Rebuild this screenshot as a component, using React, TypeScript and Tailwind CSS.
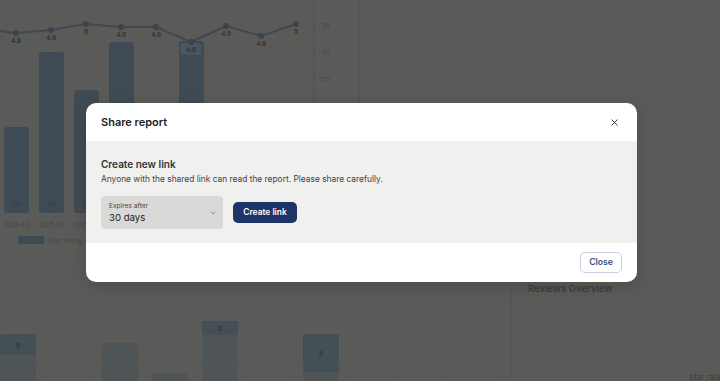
import { X, ChevronDown } from 'lucide-react';

const points = [
  { x: 16, y: 33, v: '4.8' },
  { x: 51, y: 30, v: '4.9' },
  { x: 86, y: 24, v: '5' },
  { x: 121, y: 27, v: '4.9' },
  { x: 156, y: 27, v: '4.9' },
  { x: 191, y: 42, v: '4.6' },
  { x: 226, y: 26, v: '4.9' },
  { x: 261, y: 36, v: '4.8' },
  { x: 296, y: 24, v: '5' },
];

// only the first three columns show their labels, the rest sit under the dialog
const bars = [
  { top: 127, v: '16', label: '2024-12' },
  { top: 52, v: '30', label: '2025-01' },
  { top: 90, v: '23', label: '2025-02' },
  { top: 42, v: '', label: '' },
  { top: 120, v: '', label: '' },
  { top: 41, v: '', label: '' },
  { top: 140, v: '', label: '' },
  { top: 150, v: '', label: '' },
  { top: 130, v: '', label: '' },
];

const chartFont = { fontFamily: '"Liberation Sans", Arial, sans-serif' };

function RatingChart() {
  const line = points.map((p) => `${p.x},${p.y}`).join(' ');
  return (
    <svg width="360" height="280" className="shrink-0" style={chartFont}>
      {[33, 68, 103, 138, 173, 208, 243, 278].map((x) => (
        <line key={x} x1={x} y1={0} x2={x} y2={215} stroke="#565654" strokeDasharray="1 2" />
      ))}
      {bars.map((b, i) => (
        <g key={i}>
          <rect x={4 + i * 35} y={b.top} width={25} height={213 - b.top} rx={3} fill="#3f4b54" />
          {b.v && (
            <text x={16.5 + i * 35} y={206} textAnchor="middle" fontSize="7.5" fontWeight="700" fill="#3a4146">
              {b.v}
            </text>
          )}
          {b.label && (
            <text x={16.5 + i * 35} y={227} textAnchor="middle" fontSize="7" fill="#484847">
              {b.label}
            </text>
          )}
        </g>
      ))}
      <rect x={181} y={43} width={20} height={12} rx={2} fill="#4a5660" />
      <polyline points={`0,31 ${line}`} fill="none" stroke="#3e4850" strokeWidth="2" />
      {points.map((p, i) => (
        <g key={i}>
          <circle cx={p.x} cy={p.y} r={3} fill="#3b444b" />
          <text x={p.x} y={p.y + 10} textAnchor="middle" fontSize="7" fontWeight="700" fill="#343535">
            {p.v}
          </text>
        </g>
      ))}
      <line x1={314} y1={0} x2={314} y2={215} stroke="#50504e" />
      {[
        { y: 25, v: '35' },
        { y: 52, v: '30' },
        { y: 79, v: '25' },
      ].map((t) => (
        <g key={t.v}>
          <line x1={314} y1={t.y} x2={317} y2={t.y} stroke="#50504e" />
          <text x={321} y={t.y + 3} fontSize="8" fill="#4b4b49">
            {t.v}
          </text>
        </g>
      ))}
      <line x1={359.5} y1={0} x2={359.5} y2={272} stroke="#545452" />
      <rect x={18} y={236} width={26} height={8} fill="#3f4b54" />
      <text x={48} y={243} fontSize="7.5" fill="#484847">
        Star rating
      </text>
    </svg>
  );
}

const stacks = [
  { x: 0, top: 334, seg: 355, v: '5' },
  { x: 102, top: 343, seg: 0, v: '' },
  { x: 152, top: 373, seg: 0, v: '' },
  { x: 202, top: 321, seg: 335, v: '3' },
  { x: 303, top: 334, seg: 372, v: '9' },
];

function CountChart() {
  return (
    <svg width="512" height="101" viewBox="0 280 512 101" className="shrink-0" style={chartFont}>
      <line x1={0} y1={322} x2={497} y2={322} stroke="#565654" />
      <line x1={0} y1={363} x2={497} y2={363} stroke="#565654" />
      {[43, 95, 145, 195, 245, 295, 345, 397, 447, 497].map((x) => (
        <line key={x} x1={x} y1={296} x2={x} y2={381} stroke="#565654" />
      ))}
      {stacks.map((s, i) => (
        <g key={i}>
          <rect x={s.x} y={s.top} width={36} height={381 - s.top} rx={3} fill="#4f5457" />
          {s.seg > 0 && (
            <>
              <rect x={s.x} y={s.top} width={36} height={s.seg - s.top} rx={3} fill="#444f56" />
              <text x={s.x + 18} y={(s.top + s.seg) / 2 + 3} textAnchor="middle" fontSize="7.5" fontWeight="700" fill="#35383a">
                {s.v}
              </text>
            </>
          )}
        </g>
      ))}
      <line x1={511.5} y1={280} x2={511.5} y2={381} stroke="#545452" />
    </svg>
  );
}

export default function App() {
  return (
    <div className="relative w-[720px] h-[381px] overflow-hidden bg-[#5a5a58] font-['Inter',sans-serif]">
      <div className="flex flex-col">
        <div className="flex h-[280px]">
          <RatingChart />
          <div className="flex-1" />
        </div>
        <div className="flex h-[101px]">
          <CountChart />
          <div className="flex-1 relative pl-[16px] overflow-hidden">
            <div className="mt-[2px] text-[9.5px] font-semibold text-[#3d3d3c]">Reviews Overview</div>
            <div className="absolute left-[177px] top-[92px] text-[8px] leading-[10px] text-[#3d3d3c] whitespace-nowrap">Star rating</div>
          </div>
        </div>
      </div>

      <div className="absolute left-[86px] top-[103px] w-[551px] rounded-[10px] bg-white overflow-hidden shadow-[0_4px_16px_rgba(0,0,0,0.15)]">
        <div className="flex items-center justify-between h-[38px] px-[15px]">
          <span className="text-[11px] font-semibold text-[#222]">Share report</span>
          <X className="w-[11px] h-[11px] text-[#333] mr-[2px]" strokeWidth={2} />
        </div>
        <div className="bg-[#f0f0ef] px-[15px] pt-[16px] h-[102px]">
          <div className="text-[10px] leading-[14px] font-semibold text-[#333]">Create new link</div>
          <div className="text-[8.4px] leading-[12px] text-[#444] mt-[2px]">
            Anyone with the shared link can read the report. Please share carefully.
          </div>
          <div className="flex items-center gap-[10px] mt-[11px]">
            <div className="relative w-[122px] h-[33px] rounded-[4px] bg-[#d9d9d8] pl-[8px] pt-[6px]">
              <div className="text-[6.6px] leading-[9px] text-[#444]">Expires after</div>
              <div className="text-[9.6px] leading-[14px] text-[#222]">30 days</div>
              <ChevronDown className="absolute right-[6px] top-[13px] w-[8px] h-[8px] text-[#666]" strokeWidth={2} />
            </div>
            <button className="h-[21px] w-[64px] rounded-[5px] bg-[#1e3466] text-white text-[8.4px] font-semibold">
              Create link
            </button>
          </div>
        </div>
        <div className="flex justify-end items-center h-[39px] px-[15px]">
          <button className="h-[21px] w-[42px] rounded-[5px] border border-[#c9cfe0] bg-white text-[#354a78] text-[8.6px] font-semibold">
            Close
          </button>
        </div>
      </div>
    </div>
  );
}
